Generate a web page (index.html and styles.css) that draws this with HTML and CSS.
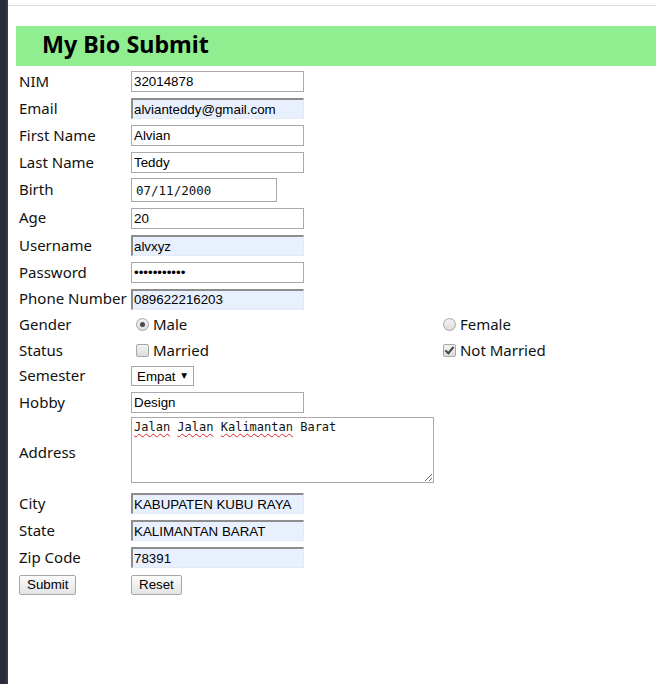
FILE: index.html
```html
<!DOCTYPE html>
<html lang="id">
<head>
<meta charset="utf-8">
<title>My Bio Submit</title>
<link rel="stylesheet" href="styles.css">
</head>
<body>
<div class="page">
  <aside class="sidebar"></aside>
  <main class="main">
    <div class="topline"></div>
    <h1 class="title">My Bio Submit</h1>
    <form class="form">
      <label class="lbl">NIM</label>
      <div class="cell"><input class="txt" type="text" value="32014878"></div>

      <label class="lbl">Email</label>
      <div class="cell"><input class="txt auto" type="text" value="alvianteddy@gmail.com"></div>

      <label class="lbl">First Name</label>
      <div class="cell"><input class="txt" type="text" value="Alvian"></div>

      <label class="lbl">Last Name</label>
      <div class="cell"><input class="txt" type="text" value="Teddy"></div>

      <label class="lbl">Birth</label>
      <div class="cell"><input class="txt date" type="text" value="07/11/2000"></div>

      <label class="lbl">Age</label>
      <div class="cell"><input class="txt" type="text" value="20"></div>

      <label class="lbl">Username</label>
      <div class="cell"><input class="txt auto" type="text" value="alvxyz"></div>

      <label class="lbl">Password</label>
      <div class="cell"><input class="txt pw" type="password" value="abcdefghijk"></div>

      <label class="lbl">Phone Number</label>
      <div class="cell"><input class="txt auto" type="text" value="089622216203"></div>

      <label class="lbl">Gender</label>
      <div class="cell"><span class="opt"><input class="radio" type="radio" name="g" checked> Male</span></div>
      <div class="cell"><span class="opt"><input class="radio" type="radio" name="g"> Female</span></div>

      <label class="lbl">Status</label>
      <div class="cell"><span class="opt"><input class="check" type="checkbox"> Married</span></div>
      <div class="cell"><span class="opt"><input class="check" type="checkbox" checked> Not Married</span></div>

      <label class="lbl">Semester</label>
      <div class="cell"><span class="sel"><select class="select"><option>Empat</option></select><span class="arrow">▼</span></span></div>

      <label class="lbl">Hobby</label>
      <div class="cell"><input class="txt" type="text" value="Design"></div>

      <label class="lbl">Address</label>
      <div class="cell top"><div class="area" contenteditable="true"><span class="sp">Jalan</span> <span class="sp">Jalan</span> <span class="sp">Kalimantan</span> Barat</div></div>

      <label class="lbl">City</label>
      <div class="cell"><input class="txt auto" type="text" value="KABUPATEN KUBU RAYA"></div>

      <label class="lbl">State</label>
      <div class="cell"><input class="txt auto" type="text" value="KALIMANTAN BARAT"></div>

      <label class="lbl">Zip Code</label>
      <div class="cell"><input class="txt auto" type="text" value="78391"></div>

      <div class="cell first"><button class="btn" type="button">Submit</button></div>
      <div class="cell"><button class="btn" type="button">Reset</button></div>
    </form>
  </main>
</div>
</body>
</html>
```
FILE: styles.css
```css
html, body {
  margin: 0;
  padding: 0;
  background: #fff;
  height: 100%;
}
.page {
  display: flex;
  min-height: 684px;
}
.sidebar {
  width: 6px;
  flex: 0 0 6px;
  background: #282c38;
  border-right: 2px solid #353a48;
}
.main {
  flex: 1;
  padding: 5px 0 0 8px;
  min-width: 0;
}
.topline {
  height: 1px;
  background: #dadada;
  margin-left: -8px;
}
.title {
  margin: 20px 0 0 0;
  height: 40px;
  line-height: 36px;
  background: #90ee90;
  padding-left: 26px;
  font-family: "Noto Sans", "Open Sans", sans-serif;
  font-weight: 700;
  font-size: 23.3px;
  color: #000;
}
.form {
  margin: 2px 0 0 3px;
  display: grid;
  grid-template-columns: 112px 307px 1fr;
  grid-template-rows: 27px 27px 27px 27px 28px 28px 27px 27px 26px 26px 25px 26px 27px 74px 27px 27px 27px 27px;
  align-items: center;
}
.lbl {
  grid-column: 1;
  font-family: "Noto Sans", "Open Sans", sans-serif;
  font-size: 15px;
  line-height: 20px;
  margin-top: -2px;
  color: #111;
  white-space: nowrap;
}
.cell {
  display: flex;
  align-items: center;
}
.cell.first {
  grid-column: 1;
}
.cell.top {
  align-self: start;
  padding-top: 1px;
}
.txt {
  box-sizing: border-box;
  width: 173px;
  height: 21px;
  margin: 0;
  padding: 1px 2px;
  border: 1px solid #a9a9a9;
  background: #fff;
  font-family: "Liberation Sans", Arial, sans-serif;
  font-size: 13.333px;
  color: #000;
  outline: none;
}
.txt.auto {
  background: #e8f0fe;
  border-top: 2px solid #8d8d8d;
  border-left: 2px solid #8d8d8d;
  border-right: 1px solid #e3e9f5;
  border-bottom: 1px solid #e3e9f5;
  padding-left: 1px;
}
.txt.date {
  width: 146px;
  height: 24px;
  padding-left: 4px;
  font-family: "DejaVu Sans Mono", monospace;
  font-size: 12.5px;
  color: #111;
}
.txt.pw {
  font-size: 13.333px;
  letter-spacing: 0;
}
.opt {
  display: inline-flex;
  align-items: center;
  margin-top: -2px;
  font-family: "Noto Sans", "Open Sans", sans-serif;
  font-size: 15px;
  line-height: 20px;
  color: #111;
  white-space: pre;
}
.radio, .check {
  appearance: none;
  -webkit-appearance: none;
  box-sizing: border-box;
  width: 13px;
  height: 13px;
  margin: 1px 0 0 5px;
  border: 1px solid #a6a6a6;
  background: linear-gradient(#f3f3f3, #dcdcdc);
  position: relative;
}
.radio {
  border-radius: 50%;
}
.radio:checked::after {
  content: "";
  position: absolute;
  left: 3px;
  top: 3px;
  width: 5px;
  height: 5px;
  border-radius: 50%;
  background: #4a4a4a;
}
.check {
  border-radius: 2px;
}
.check:checked::after {
  content: "";
  position: absolute;
  left: 3px;
  top: 0px;
  width: 3px;
  height: 7px;
  border-right: 2px solid #444;
  border-bottom: 2px solid #444;
  transform: rotate(40deg);
}
.sel {
  position: relative;
  display: inline-block;
  height: 20px;
}
.select {
  appearance: none;
  -webkit-appearance: none;
  box-sizing: border-box;
  width: 63px;
  height: 20px;
  margin: 0;
  padding: 0 0 0 5px;
  border: 1px solid #a6a6a6;
  border-radius: 0;
  background: #fff;
  font-family: "Liberation Sans", Arial, sans-serif;
  font-size: 13.333px;
  color: #000;
}
.arrow {
  position: absolute;
  right: 7px;
  top: 5px;
  font-size: 7.5px;
  line-height: 9px;
  color: #000;
  pointer-events: none;
  font-family: "DejaVu Sans", sans-serif;
}
.area {
  box-sizing: border-box;
  width: 303px;
  height: 66px;
  border: 1px solid #a9a9a9;
  padding: 2px 2px;
  font-family: "DejaVu Sans Mono", monospace;
  font-size: 12px;
  line-height: 15px;
  color: #111;
  resize: both;
  overflow: auto;
  outline: none;
  background: #fff;
}
.sp {
  text-decoration: underline wavy #e02020;
  text-decoration-thickness: 1px;
  text-underline-offset: 2px;
}
.btn {
  box-sizing: border-box;
  height: 20px;
  margin: 0;
  padding: 0 7px;
  border: 1px solid #a6a6a6;
  border-radius: 2px;
  background: linear-gradient(#fbfbfb, #e4e4e4);
  font-family: "Liberation Sans", Arial, sans-serif;
  font-size: 13.333px;
  color: #000;
}
```
